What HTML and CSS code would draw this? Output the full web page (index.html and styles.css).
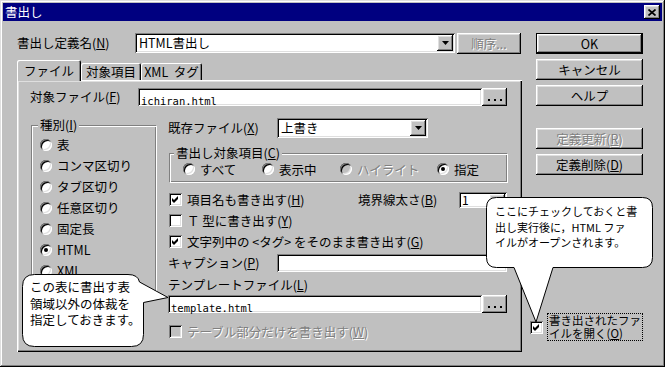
FILE: index.html
```html
<!DOCTYPE html>
<html lang="ja">
<head>
<meta charset="utf-8">
<title>書出し</title>
<link rel="stylesheet" href="styles.css">
</head>
<body>
<div class="window">
  <div class="titlebar">
    <span class="title">書出し</span>
    <span class="close raised"><svg width="8" height="7" viewBox="0 0 8 7"><path d="M0.5 0.5 L7.5 6.5 M7.5 0.5 L0.5 6.5" stroke="#000" stroke-width="1.7" fill="none"/></svg></span>
  </div>
  <div class="content">
    <div class="main">
      <div class="row1">
        <span class="lbl-def">書出し定義名(<u>N</u>)</span>
        <div class="combo sunken combo-def"><span class="val">HTML書出し</span><span class="dd raised"><svg width="7" height="4" viewBox="0 0 7 4"><polygon points="0,0 7,0 3.5,4" fill="#000"/></svg></span></div>
        <span class="btn raised btn-order dis">順序...</span>
      </div>
      <div class="tabs">
        <div class="tab active t1">ファイル</div>
        <div class="tab t2">対象項目</div>
        <div class="tab t3">XML&nbsp; タグ</div>
      </div>
      <div class="panel">
        <div class="file-row">
          <span class="lbl lbl-file">対象ファイル(<u>F</u>)</span>
          <div class="sunken file-field"><span class="mono">ichiran.html</span></div>
          <span class="btn raised dots"><svg width="14" height="2" viewBox="0 0 14 2"><rect x="0" y="0" width="2" height="2"/><rect x="6" y="0" width="2" height="2"/><rect x="12" y="0" width="2" height="2"/></svg></span>
        </div>
        <div class="cols">
          <div class="group kind">
            <span class="legend">種別(<u>I</u>)</span>
            <div class="vopts">
              <div class="opt"><span class="radio"></span><span>表</span></div>
              <div class="opt"><span class="radio"></span><span>コンマ区切り</span></div>
              <div class="opt"><span class="radio"></span><span>タブ区切り</span></div>
              <div class="opt"><span class="radio"></span><span>任意区切り</span></div>
              <div class="opt"><span class="radio"></span><span>固定長</span></div>
              <div class="opt"><span class="radio on"></span><span>HTML</span></div>
              <div class="opt"><span class="radio"></span><span>XML</span></div>
            </div>
          </div>
          <div class="rightcol">
            <div class="rowA">
              <span class="lbl lbl-w">既存ファイル(<u>X</u>)</span>
              <div class="combo sunken combo-exist"><span class="val">上書き</span><span class="dd raised"><svg width="7" height="4" viewBox="0 0 7 4"><polygon points="0,0 7,0 3.5,4" fill="#000"/></svg></span></div>
            </div>
            <div class="group target">
              <span class="legend">書出し対象項目(<u>C</u>)</span>
              <div class="hopts">
                <div class="hopt w1"><span class="radio"></span><span>すべて</span></div>
                <div class="hopt w2"><span class="radio"></span><span>表示中</span></div>
                <div class="hopt w3"><span class="radio disabled"></span><span class="dis">ハイライト</span></div>
                <div class="hopt w4"><span class="radio on"></span><span>指定</span></div>
              </div>
            </div>
            <div class="checks">
              <div class="opt">
                <span class="cb sunken"><svg width="7" height="7" viewBox="0 0 7 7"><polygon points="0,2 2,4 6,0 6,3 2,7 0,5" fill="#000"/></svg></span><span>項目名も書き出す(<u>H</u>)</span>
                <div class="bw">
                  <span class="bw-lbl">境界線太さ(<u>B</u>)</span>
                  <div class="spin sunken"><span class="val">1</span><span class="spinbtn raised"></span></div>
                </div>
              </div>
              <div class="opt"><span class="cb sunken"></span><span>Ｔ 型に書き出す(<u>Y</u>)</span></div>
              <div class="opt"><span class="cb sunken"><svg width="7" height="7" viewBox="0 0 7 7"><polygon points="0,2 2,4 6,0 6,3 2,7 0,5" fill="#000"/></svg></span><span>文字列中の &lt;タグ&gt; をそのまま書き出す(<u>G</u>)</span></div>
            </div>
            <div class="cap-row">
              <span class="lbl lbl-w">キャプション(<u>P</u>)</span>
              <div class="sunken cap-field"></div>
            </div>
            <div class="tpl-lbl">テンプレートファイル(<u>L</u>)</div>
            <div class="tpl-row">
              <div class="sunken tpl-field"><span class="mono">template.html</span></div>
              <span class="btn raised dots"><svg width="14" height="2" viewBox="0 0 14 2"><rect x="0" y="0" width="2" height="2"/><rect x="6" y="0" width="2" height="2"/><rect x="12" y="0" width="2" height="2"/></svg></span>
            </div>
            <div class="opt tbl-row"><span class="cb sunken cb-dis"></span><span class="dis">テーブル部分だけを書き出す(<u>W</u>)</span></div>
          </div>
        </div>
      </div>
    </div>
    <div class="side">
      <span class="btn default">OK</span>
      <span class="btn raised">キャンセル</span>
      <span class="btn raised">ヘルプ</span>
      <span class="btn raised upd dis">定義更新(<u>R</u>)</span>
      <span class="btn raised">定義削除(<u>D</u>)</span>
      <div class="opencheck">
        <span class="cb sunken"><svg width="7" height="7" viewBox="0 0 7 7"><polygon points="0,2 2,4 6,0 6,3 2,7 0,5" fill="#000"/></svg></span>
        <span class="focus"><span class="fl">書き出されたファ</span><span class="fl">イルを開く(<u>O</u>)</span></span>
      </div>
    </div>
  </div>
  <svg class="callouts" width="665" height="367" viewBox="0 0 665 367">
    <path d="M496.5 197.5 H642.5 Q652.5 197.5 652.5 207.5 V257.5 Q652.5 267.5 642.5 267.5 H553 L536 322 L514 267.5 H496.5 Q486.5 267.5 486.5 257.5 V207.5 Q486.5 197.5 496.5 197.5 Z" fill="#fff" stroke="#000" stroke-width="1"/>
    <path d="M34.5 274.5 H128 Q138 274.5 139.5 282 L168 297.5 L143.5 302.5 V334.5 Q143.5 346.5 131.5 346.5 H34.5 Q22.5 346.5 22.5 334.5 V286.5 Q22.5 274.5 34.5 274.5 Z" fill="#fff" stroke="#000" stroke-width="1"/>
  </svg>
  <div class="ctext ctext1">ここにチェックしておくと書<br>出し実行後に，HTML ファ<br>イルがオープンされます。</div>
  <div class="ctext ctext2">この表に書出す表<br>領域以外の体裁を<br>指定しておきます。</div>
</div>
</body>
</html>
```

FILE: styles.css
```css
* { box-sizing: border-box; }
html, body { margin: 0; padding: 0; }
body {
  width: 665px; height: 367px; overflow: hidden;
  background: #c0c0c0;
  font-family: "Noto Sans CJK JP", "Noto Sans", sans-serif;
  font-size: 12.5px; color: #000;
}
u { text-decoration: underline; text-underline-offset: 1px; }

.raised {
  background: #c0c0c0;
  box-shadow: inset -1px -1px #000, inset 1px 1px #fff, inset -2px -2px #808080, inset 2px 2px #dfdfdf;
}
.sunken {
  background: #fff;
  box-shadow: inset 1px 1px #808080, inset -1px -1px #fff, inset 2px 2px #000, inset -2px -2px #dfdfdf;
}
.dis { color: #808080; text-shadow: 1px 1px 0 #fff; }

.window {
  position: relative;
  width: 665px; height: 367px; padding: 3px;
  background: #c0c0c0;
  box-shadow: inset -1px -1px #000, inset 1px 1px #dfdfdf, inset -2px -2px #808080, inset 2px 2px #fff;
}
.titlebar {
  height: 18px; background: #000080; color: #fff;
  display: flex; align-items: center; justify-content: space-between;
  padding: 0 2px;
}
.title { line-height: 18px; }
.close { width: 16px; height: 14px; display: flex; align-items: center; justify-content: center; }

.content { display: flex; gap: 14px; padding: 12px 0 0 14px; }
.main { width: 505px; flex: none; }
.side { width: 107px; flex: none; display: flex; flex-direction: column; }

.row1 { display: flex; align-items: flex-start; height: 21px; }
.lbl-def { width: 118px; line-height: 20px; }
.combo { display: flex; align-items: center; justify-content: space-between; padding: 2px; height: 20px; }
.combo .val { padding-left: 2px; line-height: 16px; white-space: nowrap; }
.dd { width: 16px; height: 16px; flex: none; display: flex; align-items: center; justify-content: center; }
.combo-def { width: 320px; }
.btn {
  display: flex; align-items: center; justify-content: center;
  white-space: nowrap; background: #c0c0c0;
}
.btn-order { width: 64px; height: 21px; margin-left: 2px; }

.tabs { display: flex; align-items: flex-end; height: 20px; margin-top: 6px; position: relative; z-index: 1; }
.tab {
  height: 17px; display: flex; align-items: center; justify-content: center;
  background: #c0c0c0; white-space: nowrap;
  box-shadow: inset 1px 1px #fff, inset -1px 0 #000, inset -2px 0 #808080;
  border-radius: 2px 2px 0 0;
}
.tab.active { height: 21px; margin-bottom: -1px; }
.t1 { width: 64px; }
.t2 { width: 60px; }
.t3 { width: 61px; }

.panel {
  width: 505px; height: 272px; padding: 8px 14px 0 13px;
  box-shadow: inset 1px 1px #fff, inset -1px -1px #000, inset -2px -2px #808080, inset 2px 2px #dfdfdf;
}
.lbl { white-space: nowrap; }
.file-row { display: flex; height: 18px; }
.lbl-file { width: 108px; line-height: 18px; }
.file-field { width: 344px; height: 18px; padding: 2px 3px; }
.mono { font-family: "DejaVu Sans Mono", monospace; font-size: 10.5px; line-height: 14px; }
.dots { width: 25px; height: 18px; }
.dots svg { margin-top: 5px; }

.cols { display: flex; margin-top: 12px; }
.group {
  border: 1px solid; border-color: #808080 #fff #fff #808080;
  box-shadow: inset 1px 1px #fff, inset -1px -1px #808080;
}
.legend {
  display: block; width: fit-content; height: 16px; line-height: 16px;
  margin-top: -9px; background: #c0c0c0; padding: 0 2px; white-space: nowrap;
}
.kind { width: 126px; height: 167px; margin: 7px 0 0 1px; padding: 0 0 0 8px; flex: none; }
.kind .legend { margin-left: -2px; }
.vopts { margin-top: 1px; }
.opt { display: flex; align-items: center; height: 21px; white-space: nowrap; }

.radio {
  width: 12px; height: 12px; border-radius: 50%; flex: none; margin-right: 5px;
  background: #fff;
  box-shadow: inset 1px 1px #808080, inset -1px -1px #fff, inset 2px 2px #000, inset -2px -2px #dfdfdf;
  display: flex; align-items: center; justify-content: center;
}
.radio.on::after { content: ""; width: 4px; height: 4px; border-radius: 50%; background: #000; }
.radio.disabled { background: #c0c0c0; }

.cb {
  width: 13px; height: 13px; flex: none; margin-right: 5px;
  display: flex; align-items: center; justify-content: center;
}
.cb-dis { background: #c0c0c0; }

.rightcol { width: 340px; margin-left: 11px; flex: none; }
.rowA { display: flex; height: 20px; }
.lbl-w { width: 109px; line-height: 20px; flex: none; }
.combo-exist { width: 151px; }

.target { width: 339px; height: 30px; margin: 15px 0 0 1px; padding: 0 0 0 13px; }
.target .legend { margin-left: -9px; }
.hopts { display: flex; height: 14px; margin-top: 1px; }
.hopt { display: flex; align-items: center; white-space: nowrap; flex: none; }
.w1 { width: 79px; }
.w2 { width: 78px; }
.w3 { width: 97px; }

.checks { margin-top: 6px; }
.checks .cb { margin-left: 1px; }
.bw { margin-left: auto; margin-right: 1px; display: flex; align-items: center; }
.bw-lbl { width: 101px; }
.spin { width: 48px; height: 16px; display: flex; justify-content: space-between; align-items: stretch; padding: 2px 2px 2px 3px; }
.spin .val { line-height: 12px; font-size: 12px; }
.spinbtn { width: 16px; }

.cap-row { display: flex; height: 18px; margin-top: 2px; }
.cap-row .lbl-w { line-height: 18px; }
.cap-field { width: 230px; height: 18px; }
.tpl-lbl { height: 18px; line-height: 18px; margin-top: 4px; white-space: nowrap; }
.tpl-row { display: flex; height: 18px; margin-top: 1px; }
.tpl-field { width: 314px; height: 18px; padding: 2px 3px; }
.tbl-row { height: 20px; margin-top: 8px; }
.tbl-row .cb { margin-left: 1px; }

.side .btn { height: 21px; width: 107px; }
.side .btn + .btn { margin-top: 5px; }
.side .btn.upd { margin-top: 22px; }
.btn.default {
  box-shadow: inset 0 0 0 1px #000, inset -2px -2px #000, inset 2px 2px #fff, inset -3px -3px #808080, inset 3px 3px #dfdfdf;
}
.opencheck { margin-top: 138px; margin-left: -6px; display: flex; align-items: center; }
.opencheck .cb { margin-right: 4px; }
.focus {
  border: 1px dotted #000; width: 100px; height: 28px;
  display: flex; flex-direction: column;
  font-size: 11.5px; padding: 0 0 0 1px; white-space: nowrap;
}
.fl { display: block; height: 13px; line-height: 13px; overflow: visible; }

.callouts { position: absolute; left: 0; top: 0; pointer-events: none; }
.ctext { position: absolute; white-space: nowrap; }
.ctext1 { left: 495px; top: 204px; font-size: 11px; line-height: 15.5px; }
.ctext2 { left: 30px; top: 279px; font-size: 12.5px; line-height: 16.5px; }
```
